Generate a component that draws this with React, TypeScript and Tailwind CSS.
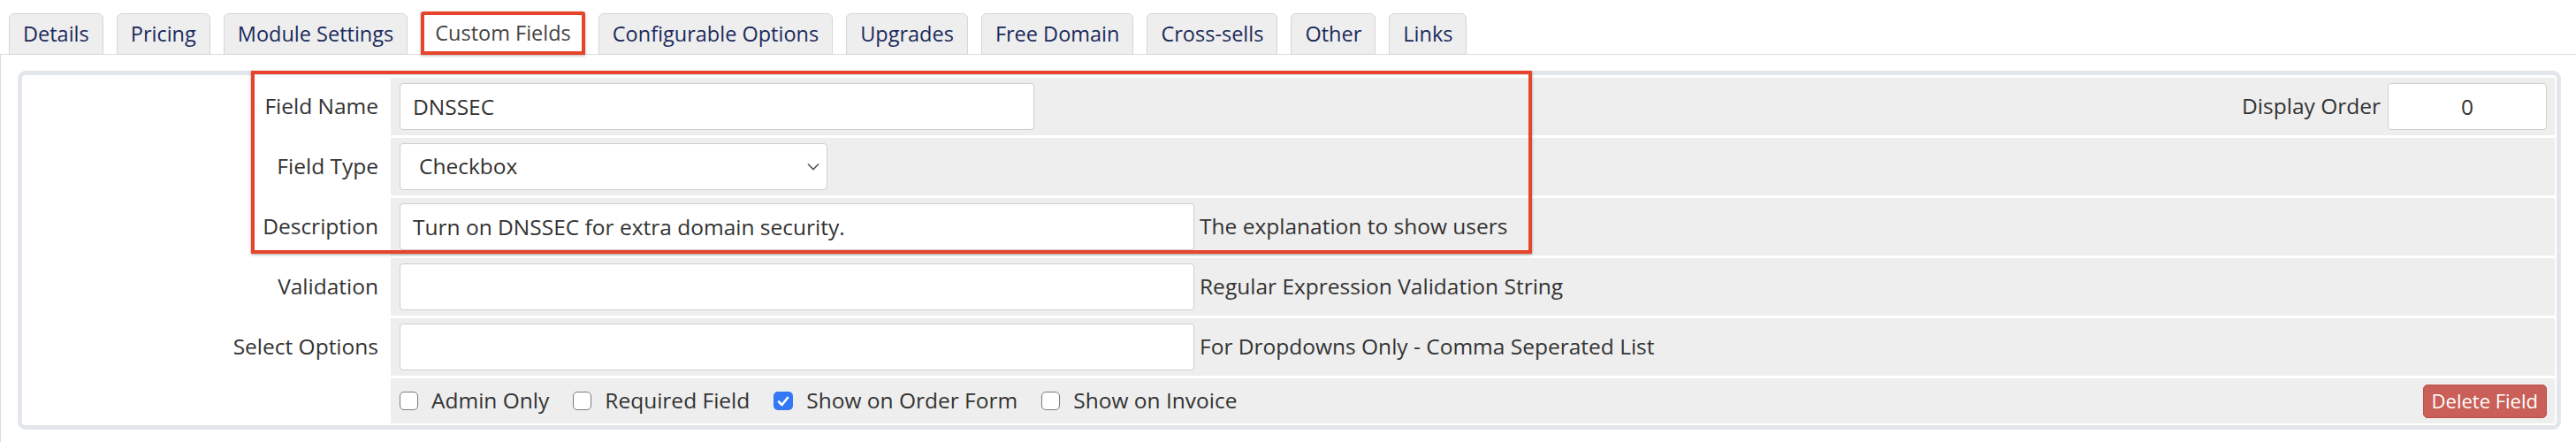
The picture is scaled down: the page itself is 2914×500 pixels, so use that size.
import { useState } from 'react';

const TABS = [
  'Details',
  'Pricing',
  'Module Settings',
  'Custom Fields',
  'Configurable Options',
  'Upgrades',
  'Free Domain',
  'Cross-sells',
  'Other',
  'Links',
];

function Checkbox({ checked, label }: { checked?: boolean; label: string }) {
  return (
    <label className="flex items-center gap-[15px]">
      {checked ? (
        <span className="flex h-[21px] w-[22px] items-center justify-center rounded-[5px] bg-[#3478f6]">
          <svg width="14" height="12" viewBox="0 0 14 12" fill="none">
            <path d="M2 6.5 L5.5 10 L12 2" stroke="white" strokeWidth="2.6" strokeLinecap="round" strokeLinejoin="round" />
          </svg>
        </span>
      ) : (
        <span className="h-[21px] w-[21px] rounded-[5px] border-[1.5px] border-[#7b7b7b] bg-white" />
      )}
      <span>{label}</span>
    </label>
  );
}

function Row({
  label,
  children,
  tall = true,
}: {
  label?: string;
  children: React.ReactNode;
  tall?: boolean;
}) {
  return (
    <div className={`flex ${tall ? 'h-[65px]' : 'h-[51px]'}`}>
      <div className="flex w-[417px] shrink-0 items-center justify-end bg-white pr-[14px]">{label}</div>
      <div className="flex flex-1 items-center bg-[#eeeeee] pl-[10px] pr-[9px]">{children}</div>
    </div>
  );
}

const inputCls =
  'h-[53px] rounded-[4px] border border-[#cfcfcf] bg-white px-[14px] text-[24.5px] text-[#333] outline-none';

export default function App() {
  const [active, setActive] = useState('Custom Fields');

  return (
    <div className="h-[500px] w-[2914px] overflow-hidden bg-white font-['Open_Sans',sans-serif] text-[24.5px] text-[#333]">
      {/* Tab strip */}
      <div className="flex h-[62px] items-end gap-[15px] border-b border-[#dcdcdc] pl-[10px] text-[23.5px]">
        {TABS.map((tab) =>
          tab === active ? (
            <button
              key={tab}
              onClick={() => setActive(tab)}
              className="-mb-px flex h-[49px] items-center rounded-t-[3px] border-4 border-[#e8442c] bg-white px-[12px] text-[#444] shadow-[0_1px_3px_rgba(0,0,0,0.3)]"
            >
              {tab}
            </button>
          ) : (
            <button
              key={tab}
              onClick={() => setActive(tab)}
              className="-mb-px flex h-[47px] items-center rounded-t-[6px] border border-[#d6d6d6] bg-[#eeeeee] px-[15px] text-[#1b2a5b]"
            >
              {tab}
            </button>
          )
        )}
      </div>

      {/* Tab content */}
      <div className="h-[438px] border-l border-[#dcdcdc] pl-[19px] pr-[17px] pt-[18px]">
        <div className="relative rounded-[9px] border-[5px] border-[#e3e6ea] bg-white pb-[2px] pr-[2px] pt-[3px]">
          <div className="flex flex-col gap-[3px]">
            <Row label="Field Name">
              <input className={`${inputCls} w-[718px]`} defaultValue="DNSSEC" />
              <div className="ml-auto flex items-center gap-[8px]">
                <span>Display Order</span>
                <input className={`${inputCls} w-[180px] text-center`} defaultValue="0" />
              </div>
            </Row>
            <Row label="Field Type">
              <div className="relative">
                <select className={`${inputCls} w-[484px] appearance-none pl-[21px]`} defaultValue="Checkbox">
                  <option>Text Box</option>
                  <option>Link/URL</option>
                  <option>Password</option>
                  <option>Drop Down</option>
                  <option>Checkbox</option>
                  <option>Text Area</option>
                </select>
                <svg
                  className="pointer-events-none absolute right-[9px] top-[22px]"
                  width="14"
                  height="9"
                  viewBox="0 0 14 9"
                  fill="none"
                >
                  <path d="M1 1.5 L7 7.5 L13 1.5" stroke="#555" strokeWidth="1.6" />
                </svg>
              </div>
            </Row>
            <Row label="Description">
              <input className={`${inputCls} w-[899px]`} defaultValue="Turn on DNSSEC for extra domain security." />
              <span className="ml-[6px]">The explanation to show users</span>
            </Row>
            <Row label="Validation">
              <input className={`${inputCls} w-[899px]`} />
              <span className="ml-[6px]">Regular Expression Validation String</span>
            </Row>
            <Row label="Select Options">
              <input className={`${inputCls} w-[899px]`} />
              <span className="ml-[6px]">For Dropdowns Only - Comma Seperated List</span>
            </Row>
            <Row tall={false}>
              <div className="flex items-center gap-[27px]">
                <Checkbox label="Admin Only" />
                <Checkbox label="Required Field" />
                <Checkbox checked label="Show on Order Form" />
                <Checkbox label="Show on Invoice" />
              </div>
              <button className="ml-auto h-[38px] rounded-[5px] border border-[#b9504a] bg-[#c95f58] px-[9px] text-[22px] text-white">
                Delete Field
              </button>
            </Row>
          </div>

          {/* highlight around the first three fields */}
          <div className="pointer-events-none absolute left-[259px] top-[-5px] h-[207px] w-[1449px] border-4 border-[#e8442c] shadow-[0_1px_3px_rgba(0,0,0,0.35)]" />
        </div>
      </div>
    </div>
  );
}
